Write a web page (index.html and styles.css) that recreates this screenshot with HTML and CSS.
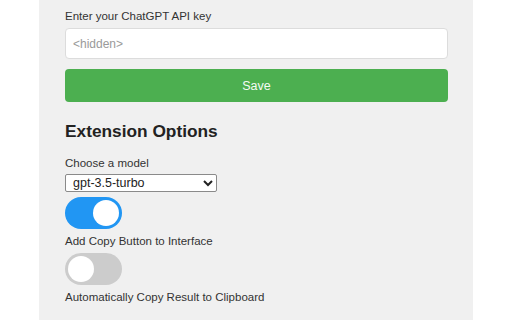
FILE: index.html
```
<!DOCTYPE html>
<html>
<head>
<meta charset="utf-8">
<link rel="stylesheet" href="styles.css">
</head>
<body>
<div class="panel">
  <label class="label first">Enter your ChatGPT API key</label>
  <input class="key" type="text" placeholder="&lt;hidden&gt;">
  <button class="save">Save</button>
  <h2 class="heading">Extension Options</h2>
  <label class="label choose">Choose a model</label>
  <select class="model">
    <option>gpt-3.5-turbo</option>
  </select>
  <div class="switch on"></div>
  <label class="label opt">Add Copy Button to Interface</label>
  <div class="switch"></div>
  <label class="label opt">Automatically Copy Result to Clipboard</label>
</div>
</body>
</html>
```
FILE: styles.css
```
html, body {
  margin: 0;
  padding: 0;
  background: #ffffff;
  height: 100%;
  overflow: hidden;
}
.panel {
  margin-left: 39px;
  width: 383px;
  height: 320px;
  box-sizing: content-box;
  padding: 9px 25px 0 26px;
  background: #f0f0f0;
  display: flex;
  flex-direction: column;
  align-items: flex-start;
  font-family: "Liberation Sans", Arial, sans-serif;
  color: #333;
}
.label {
  font-size: 11.5px;
  line-height: 14px;
  display: block;
}
.key {
  margin: 5px 0 0 0;
  width: 100%;
  height: 31px;
  box-sizing: border-box;
  border: 1px solid #dcdcdc;
  border-radius: 4px;
  padding: 0 7px;
  font-family: "Liberation Sans", Arial, sans-serif;
  font-size: 12px;
  background: #fff;
  outline: none;
}
.key::placeholder {
  color: #9a9a9a;
}
.save {
  margin: 10px 0 0 0;
  width: 100%;
  height: 33px;
  border: none;
  border-radius: 4px;
  background: #4caf50;
  color: #f4fbf4;
  font-family: "Liberation Sans", Arial, sans-serif;
  font-size: 12.5px;
  padding: 0;
}
.heading {
  margin: 19px 0 0 0;
  font-size: 17.3px;
  line-height: 20px;
  font-weight: bold;
  color: #222;
}
.choose {
  margin-top: 15px;
}
.model {
  margin: 4px 0 0 0;
  width: 152px;
  height: 18px;
  font-family: "Liberation Sans", Arial, sans-serif;
  font-size: 12.5px;
  color: #222;
  background: #fff;
  border: 1px solid #8a8a8a;
  border-radius: 2px;
  padding: 0 0 0 3px;
}
.switch {
  margin-top: 5px;
  width: 57px;
  height: 32px;
  border-radius: 16px;
  background: #cccccc;
  position: relative;
  flex: none;
}
.switch::before {
  content: "";
  position: absolute;
  left: 3px;
  top: 3px;
  width: 26px;
  height: 26px;
  border-radius: 50%;
  background: #fff;
}
.switch.on {
  background: #2196f3;
}
.switch.on::before {
  left: 28px;
}
.opt {
  margin-top: 5px;
}
```
